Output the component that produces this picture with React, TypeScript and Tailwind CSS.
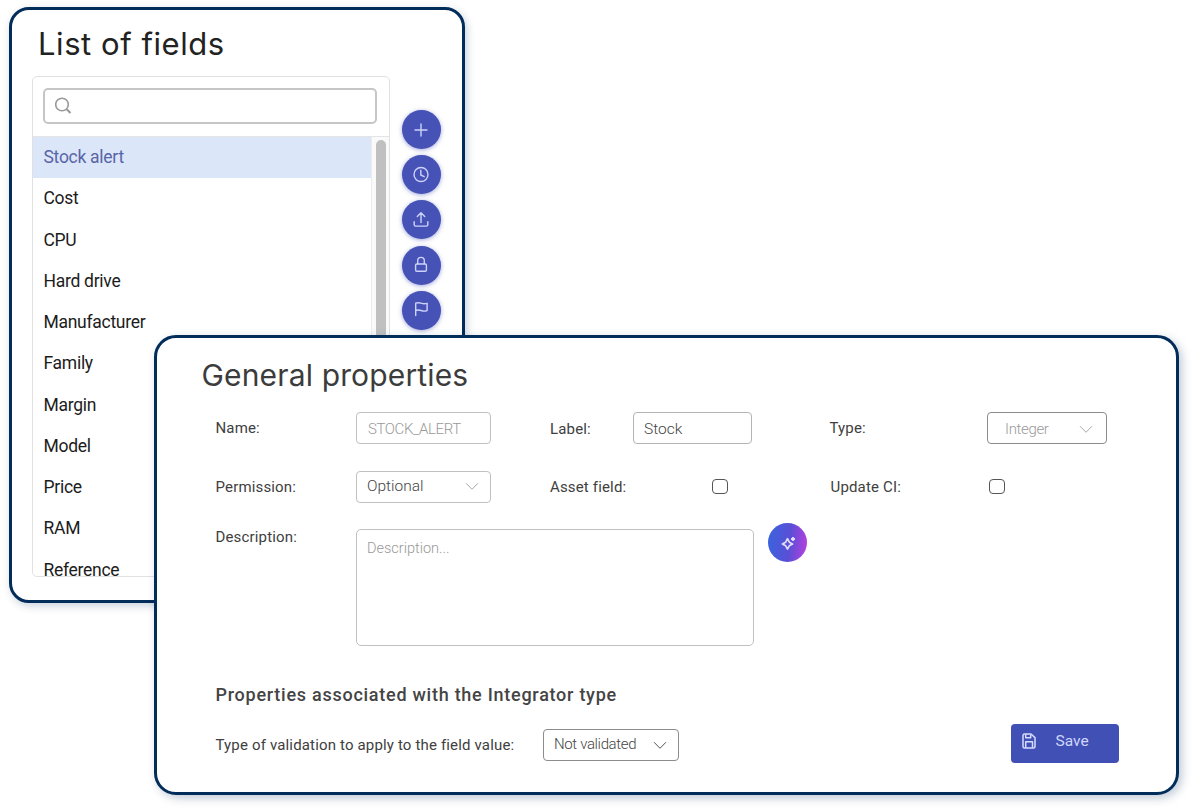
import type { ReactNode } from 'react'

const fields = [
  'Stock alert',
  'Cost',
  'CPU',
  'Hard drive',
  'Manufacturer',
  'Family',
  'Margin',
  'Model',
  'Price',
  'RAM',
  'Reference',
]

const actions: { name: string; icon: ReactNode }[] = [
  { name: 'add', icon: <path d="M10 4v12M4 10h12" /> },
  {
    name: 'history',
    icon: (
      <>
        <circle cx="10" cy="9.5" r="7" />
        <path d="M9.8 5.200v4.800l3.400 1.600" />
      </>
    ),
  },
  {
    name: 'upload',
    icon: <path d="M10 12.500V2.900M6.300 6.500 10 2.800 13.700 6.500M3.200 11.800v2.900a1.400 1.400 0 0 0 1.400 1.400h10.800a1.400 1.400 0 0 0 1.400-1.400v-2.900" />,
  },
  {
    name: 'lock',
    icon: (
      <>
        <rect x="4.600" y="9" width="10.800" height="7.200" rx="1.200" />
        <path d="M6.700 8.800V5.700a3.300 3.300 0 0 1 6.600 0v3.100" />
      </>
    ),
  },
  {
    name: 'flag',
    icon: <path d="M4.700 15.600V3.100c2-.7 3.600-.5 5.400.1 2 .7 3.800.8 6 .1v7.300c-2.200.8-4 .6-6-.1-1.800-.6-3.400-.7-5.400 0" />,
  },
]

function Chevron({ className }: { className: string }) {
  return (
    <svg width="14" height="9" viewBox="0 0 14 9" fill="none" stroke="currentColor" className={className}>
      <path d="M1 1.200 7 7.300 13 1.200" />
    </svg>
  )
}

function Label({ children, className = '' }: { children: ReactNode; className?: string }) {
  return (
    <span className={`text-[15px] leading-5 tracking-[0.16px] whitespace-nowrap text-[#404040] ${className}`}>
      {children}
    </span>
  )
}

function FieldsPanel() {
  return (
    <section className="absolute left-[9px] top-[7px] w-[456px] h-[596px] rounded-[20px] border-[3px] border-[#022c5a] bg-white shadow-[2px_3px_9px_rgba(2,44,90,0.22)] pl-5 flex flex-col">
      <h1 className="mt-[14px] ml-[6px] h-[40px] leading-[40px] font-[family-name:Inter] text-[31px] tracking-[0.55px] text-[#222]">
        List of fields
      </h1>
      <div className="flex mt-3">
        <div className="w-[358px] h-[501px] shrink-0 rounded-[5px] border border-[#e1e1e4]">
          <div className="h-[59px] pt-[11px] pl-[10px]">
            <div className="w-[334px] h-[36px] rounded-[5px] border-2 border-[#c6c6c6] flex items-center pl-[10px]">
              <svg width="18" height="18" viewBox="0 0 18 18" fill="none" stroke="#999" strokeWidth="1.600">
                <circle cx="7" cy="7.500" r="6.300" />
                <path d="m11.700 12.200 3.800 3.800" strokeWidth="2" />
              </svg>
            </div>
          </div>
          <div className="flex h-[440px] border-t border-[#e4e4e7]">
            <ul className="w-[338px]">
              {fields.map((field, i) => (
                <li
                  key={field}
                  className={`h-[41.25px] leading-[41px] pl-[10.5px] text-[17.500px] tracking-[-0.28px] ${
                    i === 0 ? 'bg-[#dce6f9] text-[#5865a6]' : 'text-[#1c1c1c]'
                  }`}
                >
                  {field}
                </li>
              ))}
            </ul>
            <div className="w-[18px] border-l border-[#ececee] bg-[#fafafa] pt-[3px] pl-[4px]">
              <div className="w-[10px] h-[420px] rounded-full bg-[#c0c0c0]" />
            </div>
          </div>
        </div>
        <div className="ml-3 mt-[34px] flex flex-col gap-[6.200px]">
          {actions.map(({ name, icon }) => (
            <button
              key={name}
              aria-label={name}
              className="size-[39px] shrink-0 pr-px rounded-full bg-[#4652b6] shadow-[0_1px_4px_rgba(67,80,181,0.5)] flex items-center justify-center"
            >
              <svg
                width="20"
                height="20"
                viewBox="0 0 20 20"
                fill="none"
                stroke="#cdd2fa"
                strokeWidth="1.400"
                strokeLinecap="round"
                strokeLinejoin="round"
              >
                {icon}
              </svg>
            </button>
          ))}
        </div>
      </div>
    </section>
  )
}

function PropertiesPanel() {
  return (
    <section className="absolute left-[154px] top-[335px] w-[1025px] h-[460px] rounded-[22px] border-[3px] border-[#022c5a] bg-white shadow-[3px_3px_10px_rgba(2,44,90,0.25)] pl-[58.500px] flex flex-col">
      <h2 className="mt-[17px] -ml-[14px] h-[42px] leading-[41px] font-[family-name:Inter] text-[30px] tracking-[0.15px] text-[#3c3c3c]">
        General properties
      </h2>
      <div className="mt-[15px] h-8 grid grid-cols-[140.5px_194px_83px_196.5px_157.5px_120px] items-center">
        <Label>Name:</Label>
        <div className="w-[135px] h-8 rounded-[4px] border border-[#c0c0c0] pl-[11px] leading-[32px] text-[15px] tracking-[-0.4px] font-light text-[#999]">
          STOCK_ALERT
        </div>
        <Label className="mt-[2px]">Label:</Label>
        <div className="w-[119px] h-8 rounded-[4px] border border-[#b5b5b5] pl-[10px] leading-[32px] text-[15.500px] font-light text-[#444]">
          Stock
        </div>
        <Label>Type:</Label>
        <div className="w-[120px] h-8 rounded-[4px] border border-[#8c8c8c] pl-[17px] pr-[13px] flex items-center justify-between text-[15px] tracking-[-0.35px] font-light text-[#999]">
          <span className="mt-[2px]">Integer</span>
          <Chevron className="mt-[2px] text-[#aaa]" />
        </div>
      </div>
      <div className="mt-[27px] h-8 grid grid-cols-[140.5px_194px_83px_197.5px_156.5px_120px] items-center">
        <Label>Permission:</Label>
        <div className="w-[135px] h-8 rounded-[4px] border border-[#c0c0c0] pl-[10px] pr-[11px] flex items-center justify-between text-[15.500px] font-light text-[#444]">
          <span>Optional</span>
          <Chevron className="-mt-px text-[#aaa]" />
        </div>
        <Label>Asset field:</Label>
        <span className="ml-[79px] -mt-px w-4 h-[15px] rounded-[4px] border border-[#555]" />
        <Label>Update CI:</Label>
        <span className="ml-[1.500px] -mt-px w-4 h-[15px] rounded-[4px] border border-[#555]" />
      </div>
      <div className="mt-[26px] flex items-start">
        <Label className="w-[140.5px] -mt-[2px]">Description:</Label>
        <div className="w-[398px] h-[117px] rounded-[5px] border border-[#c0c0c0] pl-[10px] pt-[9px] leading-5 text-[14.500px] font-light text-[#999]">
          Description...
        </div>
        <button
          aria-label="suggest"
          className="ml-[14px] -mt-[6px] size-[39px] rounded-full bg-[linear-gradient(95deg,#3c62dd_5%,#5a4fd6_55%,#b040de_95%)] flex items-center justify-center"
        >
          <svg width="18" height="18" viewBox="0 0 18 18" fill="none" stroke="#e0dcff" strokeLinejoin="round">
            <path d="M8.500 4.700 10.300 8.200 13.600 10 10.300 11.800 8.500 15.100 6.700 11.800 3.400 10 6.700 8.200Z" strokeWidth="1.700" />
            <path d="M14 3v4M12 5h4" strokeWidth="1.800" />
          </svg>
        </button>
      </div>
      <h3 className="mt-[37px] h-6 leading-6 text-[18px] font-medium tracking-[0.740px] text-[#444]">
        Properties associated with the Integrator type
      </h3>
      <div className="mt-[16px] flex items-center h-10">
        <Label className="w-[327.5px] mt-[3px]">Type of validation to apply to the field value:</Label>
        <div className="w-[136px] h-8 mt-[3px] rounded-[4px] border border-[#8c8c8c] pl-[10px] pr-[11px] flex items-center justify-between text-[15px] tracking-[-0.35px] font-light text-[#444]">
          Not validated
          <Chevron className="mt-[2px] text-[#555]" />
        </div>
        <button className="ml-[331.5px] w-[108px] h-[39px] rounded-[4px] bg-[#4050b5] flex items-center pl-[11px] pb-[3px] text-[15.500px] text-[#d0d6fb]">
          <svg width="14" height="16" viewBox="0 0 14 16" fill="none" stroke="#d6dbff" strokeWidth="1.500" strokeLinejoin="round" className="-mt-px">
            <path d="M2.500 1H9l4 3.600v8.900a1.500 1.500 0 0 1-1.500 1.500h-9A1.500 1.500 0 0 1 1 13.500v-11A1.500 1.500 0 0 1 2.500 1Z" />
            <path d="M3.700 1.200v3.500h5V1.200M3.700 14.800V8.700h6.800v6.100" />
          </svg>
          <span className="ml-[20px]">Save</span>
        </button>
      </div>
    </section>
  )
}

export default function App() {
  return (
    <main className="relative w-[1200px] h-[810px] overflow-hidden bg-white font-[Roboto,sans-serif]">
      <FieldsPanel />
      <PropertiesPanel />
    </main>
  )
}
